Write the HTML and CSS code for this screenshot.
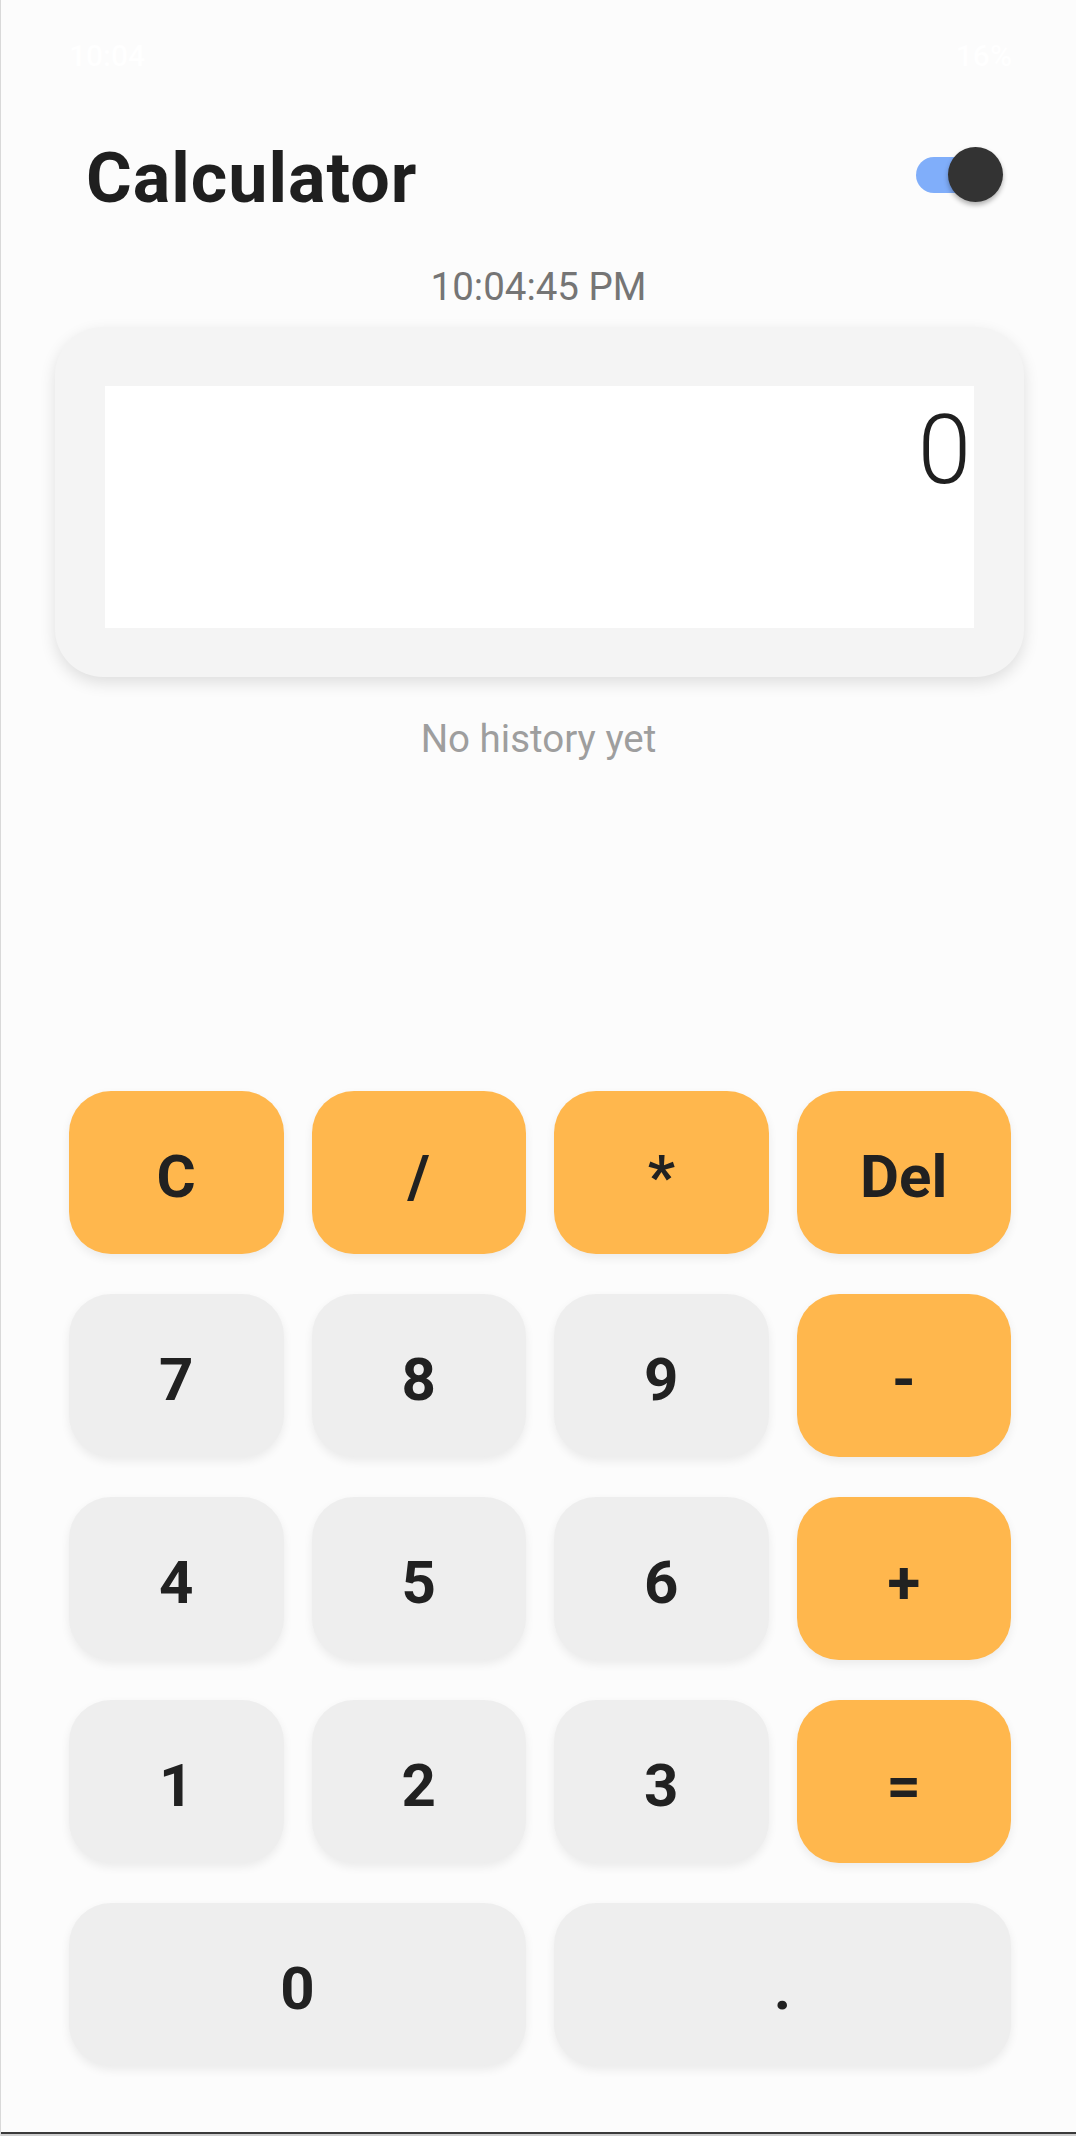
FILE: index.html
```html
<!DOCTYPE html>
<html lang="en">
<head>
<meta charset="utf-8">
<title>Calculator</title>
<link rel="stylesheet" href="styles.css">
</head>
<body>
<div class="screen">
  <div class="statusbar">
    <span class="sb-time">10:04</span>
    <span class="sb-right">16%</span>
  </div>
  <header class="header">
    <h1 class="title">Calculator</h1>
    <div class="toggle">
      <span class="track"></span>
      <span class="knob"></span>
    </div>
  </header>
  <div class="clock">10:04:45 PM</div>
  <section class="card">
    <div class="display">0</div>
  </section>
  <div class="history">No history yet</div>
  <div class="keypad">
    <button class="key op">C</button>
    <button class="key op">/</button>
    <button class="key op">*</button>
    <button class="key op">Del</button>
    <button class="key">7</button>
    <button class="key">8</button>
    <button class="key">9</button>
    <button class="key op">-</button>
    <button class="key">4</button>
    <button class="key">5</button>
    <button class="key">6</button>
    <button class="key op">+</button>
    <button class="key">1</button>
    <button class="key">2</button>
    <button class="key">3</button>
    <button class="key op">=</button>
    <button class="key wide">0</button>
    <button class="key wide">.</button>
  </div>
  <div class="navline"></div>
</div>
</body>
</html>
```
FILE: styles.css
```css
html, body {
  margin: 0;
  padding: 0;
  background: #fcfcfc;
}
body {
  font-family: Roboto, "Noto Sans", "Liberation Sans", sans-serif;
  color: #212121;
}
.screen {
  width: 1076px;
  height: 2136px;
  box-sizing: border-box;
  border-left: 1px solid #d9d9d9;
  display: flex;
  flex-direction: column;
  overflow: hidden;
}
.statusbar {
  height: 110px;
  box-sizing: border-box;
  padding: 38px 64px 0 68px;
  display: flex;
  justify-content: space-between;
  font-size: 30px;
  line-height: 35px;
  color: #ffffff;
  font-weight: 500;
}
.header {
  margin-top: 28px;
  height: 80px;
  padding: 0 73px 0 85px;
  display: flex;
  align-items: center;
  justify-content: space-between;
}
.title {
  margin: 0;
  font-size: 70px;
  line-height: 80px;
  font-weight: 700;
  letter-spacing: 1px;
  color: #1f1f1f;
}
.toggle {
  position: relative;
  width: 87px;
  height: 56px;
  margin-bottom: 6px;
}
.track {
  position: absolute;
  left: 0;
  top: 10px;
  width: 80px;
  height: 36px;
  border-radius: 18px;
  background: #80aefa;
}
.knob {
  position: absolute;
  left: 32px;
  top: 0;
  width: 55px;
  height: 55px;
  border-radius: 50%;
  background: #333333;
  box-shadow: 0 3px 5px rgba(0, 0, 0, 0.3);
}
.clock {
  margin-top: 46px;
  font-size: 38.5px;
  line-height: 45px;
  color: #757575;
  text-align: center;
}
.card {
  margin: 18px 52px 0 54px;
  height: 350px;
  box-sizing: border-box;
  padding: 59px 50px 49px;
  border-radius: 48px;
  background: #f4f4f4;
  box-shadow: 0 6px 16px rgba(0, 0, 0, 0.12);
}
.display {
  height: 100%;
  box-sizing: border-box;
  background: #ffffff;
  padding: 8px 3px 0 0;
  text-align: right;
  font-size: 96px;
  line-height: 112px;
  font-weight: 300;
  color: #1f1f1f;
}
.history {
  margin-top: 39px;
  font-size: 38.5px;
  line-height: 45px;
  color: #9e9e9e;
  text-align: center;
}
.keypad {
  margin: auto 65px 66px 68px;
  display: grid;
  grid-template-columns: repeat(4, 1fr);
  grid-auto-rows: 163px;
  column-gap: 28px;
  row-gap: 40px;
}
.key {
  border: none;
  padding: 8px 0 0;
  margin: 0;
  border-radius: 42px;
  background: #eeeeee;
  font-family: inherit;
  font-size: 60px;
  font-weight: 700;
  color: #212121;
  box-shadow: 0 4px 10px rgba(0, 0, 0, 0.07);
}
.key.op {
  background: #ffb74d;
}
.key.wide {
  grid-column: span 2;
}
.navline {
  height: 4px;
  border-top: 2px solid #3a3a3a;
  box-sizing: border-box;
  background: #cfcfcf;
}
```
